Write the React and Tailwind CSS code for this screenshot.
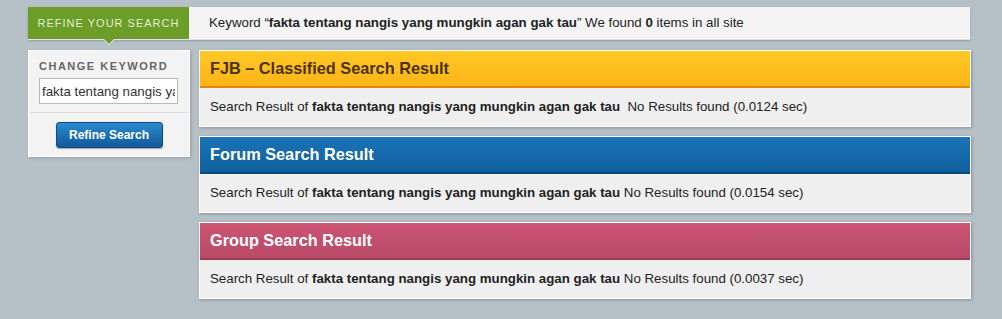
import React from 'react';

const KEYWORD = 'fakta tentang nangis yang mungkin agan gak tau';

const panels = [
    {
        title: 'FJB – Classified Search Result',
        head: 'bg-gradient-to-b from-[#ffc925] to-[#fdb416] border-b-2 border-[#e0880e] text-[#4a3210]',
        time: '0.0124',
        gap: true,
    },
    {
        title: 'Forum Search Result',
        head: 'bg-gradient-to-b from-[#1a74b6] to-[#0f5f9d] border-b-2 border-[#0b4a78] text-white',
        time: '0.0154',
    },
    {
        title: 'Group Search Result',
        head: 'bg-gradient-to-b from-[#cd5473] to-[#b84a68] border-b-2 border-[#9c3c56] text-white',
        time: '0.0037',
    },
];

const ResultPanel = ({ panel }) => (
    <div className="border border-white bg-[#efefef] shadow-[1px_1px_3px_rgba(0,0,0,0.25)]">
        <div className={`h-[37px] flex items-center px-[10px] text-[16.3px] font-bold ${panel.head}`}>
            {panel.title}
        </div>
        <div className="h-[38px] flex items-center px-[10px] text-[13.3px] text-[#222]">
            Search Result of&nbsp;<b>{KEYWORD}</b>
            {panel.gap ? '\u00a0\u00a0' : '\u00a0'}No Results found ({panel.time} sec)
        </div>
    </div>
);

const App = () => {
    return (
        <div
            className="w-[1002px] h-[319px] bg-[#b6c0c7] pt-[7px] pl-[28px] overflow-hidden"
            style={{ fontFamily: '"Liberation Sans", Arial, sans-serif' }}
        >
            {/* Top bar */}
            <div className="w-[942px] h-[33px] flex bg-[#f4f4f4] border-b border-[#e4e4e4] shadow-[0_1px_2px_rgba(0,0,0,0.2)]">
                <div className="relative w-[161px] bg-[#6b9d28] flex items-center justify-center text-[11px] tracking-[1px] text-[#e3eed3]">
                    REFINE YOUR SEARCH
                    <div className="absolute left-1/2 -translate-x-1/2 top-full w-0 h-0 border-l-[6px] border-r-[6px] border-t-[6px] border-l-transparent border-r-transparent border-t-[#f2f2f2]" />
                    <div className="absolute left-1/2 -translate-x-1/2 top-full w-0 h-0 border-l-[5px] border-r-[5px] border-t-[5px] border-l-transparent border-r-transparent border-t-[#6b9d28]" />
                </div>
                <div className="flex items-center pl-[20px] text-[13.3px] text-[#222]">
                    Keyword “<b>{KEYWORD}</b>” We found&nbsp;<b>0</b>&nbsp;items in all site
                </div>
            </div>

            <div className="flex gap-[9px] mt-[10px]">
                {/* Sidebar */}
                <div className="w-[162px] h-[107px] bg-[#f3f3f3] border border-white shadow-[1px_1px_3px_rgba(0,0,0,0.2)] self-start">
                    <div className="px-[10px] pt-[9px] pb-[8px] border-b border-[#dcdcdc]">
                        <div className="text-[11px] font-bold tracking-[1.5px] text-[#666] leading-[13px]">CHANGE KEYWORD</div>
                        <input
                            readOnly
                            value={KEYWORD}
                            className="mt-[5px] h-[26px] w-[139px] border border-[#b9b9b9] bg-white px-[2px] text-[13.3px] text-[#333] outline-none"
                        />
                    </div>
                    <div className="flex justify-center pt-[9px]">
                        <button className="w-[107px] h-[26px] rounded-[3px] bg-gradient-to-b from-[#2a8bd0] to-[#11599a] border border-[#0d4a80] text-white text-[12px] font-bold shadow-[0_1px_1px_rgba(0,0,0,0.3)]">
                            Refine Search
                        </button>
                    </div>
                </div>

                {/* Results */}
                <div className="w-[772px] flex flex-col gap-[9px]">
                    {panels.map((p) => (
                        <ResultPanel key={p.title} panel={p} />
                    ))}
                </div>
            </div>
        </div>
    );
};

export default App;
